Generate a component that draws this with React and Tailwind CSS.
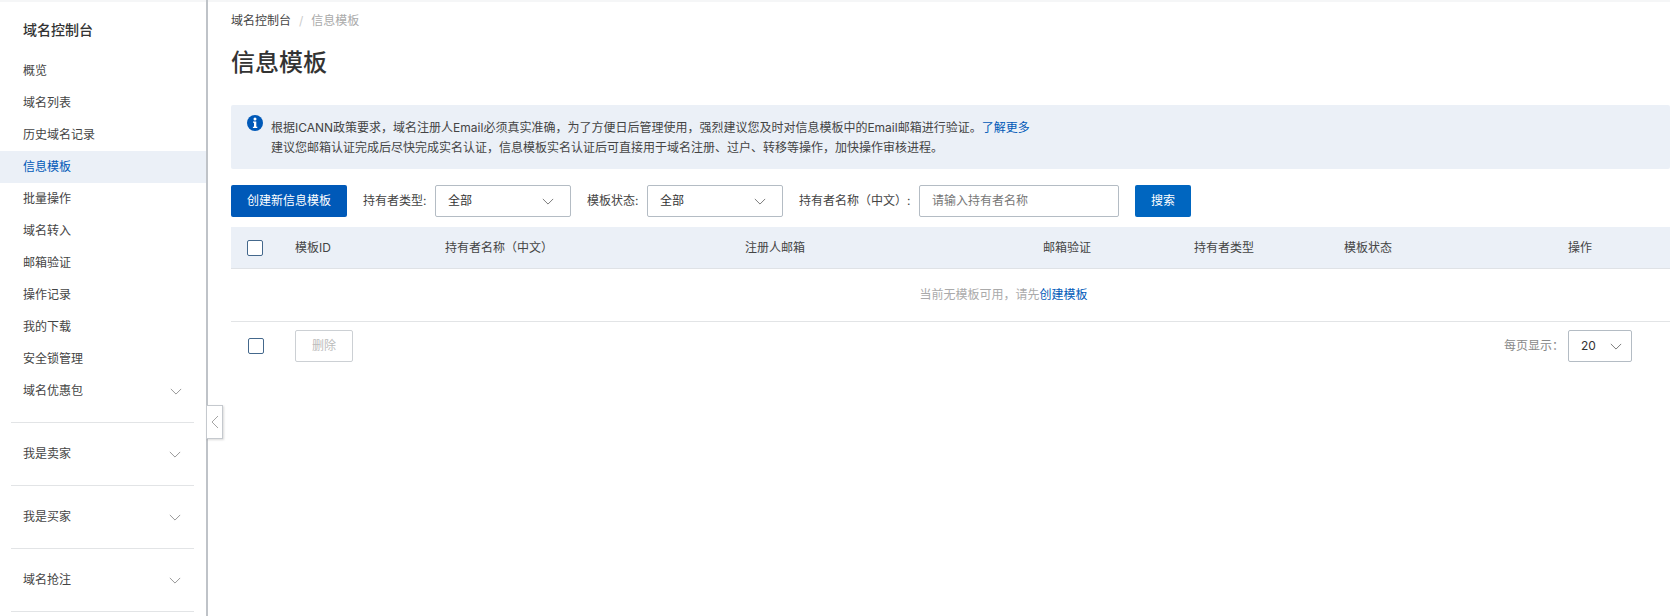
function Chevron({ className = "" }) {
  return (
    <svg viewBox="0 0 14 8" className={className} fill="none" stroke="currentColor" strokeWidth="1">
      <path d="M1 1l6 6 6-6" />
    </svg>
  );
}
function Check({ className = "" }) {
  return <span className={"block w-4 h-4 rounded-[2px] border border-[#44688c] bg-white " + className} />;
}
function Select({ label, w = "w-[136px]", pr = "pr-[16px]" }) {
  return (
    <div className={w + " " + pr + " h-8 border border-[#b4bcc4] rounded-[2px] bg-white flex items-center justify-between pl-[12px] text-[12px] text-[#333]"}>
      <span>{label}</span>
      <Chevron className="w-[12px] h-[7px] text-[#666]" />
    </div>
  );
}
const items = ["概览", "域名列表", "历史域名记录", "信息模板", "批量操作", "域名转入", "邮箱验证", "操作记录", "我的下载", "安全锁管理"];
const groups = ["我是卖家", "我是买家", "域名抢注"];
const cols = ["模板ID", "持有者名称（中文）", "注册人邮箱", "邮箱验证", "持有者类型", "模板状态", "操作"];

export default function App() {
  return (
    <div className="relative flex h-[616px] w-[1670px] overflow-hidden bg-white text-[12px] text-[#333] font-['Inter','Noto_Sans_CJK_SC',sans-serif]">
      <div className="absolute top-0 left-0 right-0 h-[2px] bg-[#f5f6f7]" />
      <aside className="relative w-[208px] shrink-0 border-r-2 border-[#bfc3c8] h-full">
        <div className="pl-[23px] pt-[20px] h-[55px] text-[14px] font-medium leading-5 text-[#333]">域名控制台</div>
        <nav>
          {items.map((t) => (
            <div key={t} className={"h-8 flex items-center pl-[23px] " + (t === "信息模板" ? "bg-[#ebf0f7] text-[#0059b8]" : "text-[#444]")}>{t}</div>
          ))}
          <div className="h-8 flex items-center justify-between pl-[23px] pr-[24px] text-[#444]">
            <span>域名优惠包</span>
            <Chevron className="w-[12px] h-[7px] text-[#888]" />
          </div>
        </nav>
        <div className="mx-[11px] mt-[15px] w-[183px] border-t border-[#e2e4e6]" />
        {groups.map((t) => (
          <div key={t} className="mx-[11px] w-[183px] h-[63px] border-b border-[#e2e4e6] flex items-center justify-between pl-[12px] pr-[13px] text-[#444]">
            <span>{t}</span>
            <Chevron className="w-[12px] h-[7px] text-[#888]" />
          </div>
        ))}
        <div className="absolute left-[206px] top-[405px] w-[17px] h-[34px] bg-white border border-[#c5c9ce] shadow-[1px_1px_2px_rgba(0,0,0,0.15)] flex items-center justify-center text-[#a5a5a5]">
          <svg viewBox="0 0 8 14" className="w-[8px] h-[14px]" fill="none" stroke="currentColor" strokeWidth="1"><path d="M7 1L1 7l6 6" /></svg>
        </div>
      </aside>

      <main className="flex-1 min-w-0 pl-[23px]">
        <div className="h-[41px] pt-[12px] leading-[17px] flex items-start">
          <span className="text-[#444]">域名控制台</span>
          <span className="mx-[8px] text-[#ccc]">/</span>
          <span className="text-[#aaa]">信息模板</span>
        </div>
        <h1 className="h-[64px] pt-[1px] text-[24px] leading-[42px] font-medium text-[#333]">信息模板</h1>
        <div className="h-[64px] bg-[#ebf0f7] rounded-[2px] flex pl-[16px] pt-[10px]">
          <svg viewBox="0 0 16 16" className="w-4 h-4 shrink-0 mr-[8px]">
            <circle cx="8" cy="8" r="8" fill="#0059b8" />
            <circle cx="8" cy="3.9" r="1.5" fill="#fff" />
            <path d="M6 6.4h3.3v5.3h1v1.4H5.9v-1.4h1.1V7.8H6z" fill="#fff" />
          </svg>
          <div className="mt-[3px] leading-[20px] text-[#444]">
            <div>根据ICANN政策要求，域名注册人Email必须真实准确，为了方便日后管理使用，强烈建议您及时对信息模板中的Email邮箱进行验证。<span className="text-[#0059b8]">了解更多</span></div>
            <div>建议您邮箱认证完成后尽快完成实名认证，信息模板实名认证后可直接用于域名注册、过户、转移等操作，加快操作审核进程。</div>
          </div>
        </div>
        <div className="mt-[16px] h-8 flex items-center">
          <button className="w-[116px] h-8 bg-[#0059b8] rounded-[2px] text-white text-[12px]">创建新信息模板</button>
          <span className="ml-[16px] w-[72px] text-[#444]">持有者类型:</span>
          <Select label="全部" />
          <span className="ml-[16px] w-[60px] text-[#444]">模板状态:</span>
          <Select label="全部" />
          <span className="ml-[16px] w-[120px] text-[#444]">持有者名称（中文）:</span>
          <div className="w-[200px] h-8 border border-[#b4bcc4] rounded-[2px] flex items-center pl-[12px] text-[#777]">请输入持有者名称</div>
          <button className="ml-[16px] w-[56px] h-8 bg-[#0066c0] rounded-[2px] text-white text-[12px]">搜索</button>
        </div>
        <div className="mt-[10px] h-[42px] bg-[#ebf0f7] border-b border-[#dfe2e6] grid grid-cols-[64px_150px_300px_298px_151px_150px_224px_1fr] items-center text-[#444]">
          <div className="pl-[16px]"><Check /></div>
          {cols.map((c) => <div key={c}>{c}</div>)}
        </div>
        <div className="h-[53px] border-b border-[#e2e4e6] flex items-center justify-center text-[#aaa] pl-[106px]">
          <span>当前无模板可用，请先<span className="text-[#0059b8]">创建模板</span></span>
        </div>
        <div className="mt-[8px] h-8 flex items-center">
          <Check className="ml-[17px]" />
          <button className="ml-[31px] w-[58px] h-8 border border-[#ccd0d4] rounded-[2px] text-[#bbb] text-[12px]">删除</button>
          <div className="ml-auto mr-[38px] flex items-center">
            <span className="mr-[4px] text-[#888]">每页显示：</span>
            <Select label="20" w="w-[64px]" pr="pr-[9px]" />
          </div>
        </div>
      </main>
    </div>
  );
}
